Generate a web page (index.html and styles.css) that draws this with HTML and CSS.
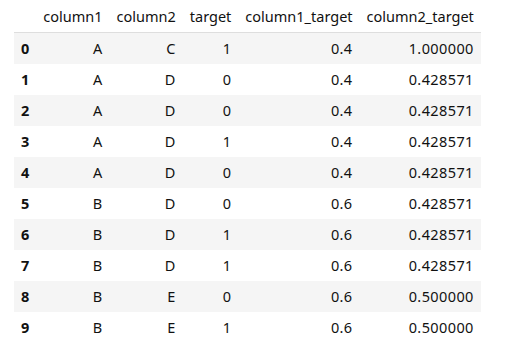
FILE: index.html
```html
<!DOCTYPE html>
<html>
<head>
<meta charset="utf-8">
<link rel="stylesheet" href="styles.css">
</head>
<body>
<div class="output">
<table class="dataframe">
<thead>
<tr><th class="blank"></th><th>column1</th><th>column2</th><th>target</th><th>column1_target</th><th>column2_target</th></tr>
</thead>
<tbody>
<tr><th>0</th><td>A</td><td>C</td><td>1</td><td>0.4</td><td>1.000000</td></tr>
<tr><th>1</th><td>A</td><td>D</td><td>0</td><td>0.4</td><td>0.428571</td></tr>
<tr><th>2</th><td>A</td><td>D</td><td>0</td><td>0.4</td><td>0.428571</td></tr>
<tr><th>3</th><td>A</td><td>D</td><td>1</td><td>0.4</td><td>0.428571</td></tr>
<tr><th>4</th><td>A</td><td>D</td><td>0</td><td>0.4</td><td>0.428571</td></tr>
<tr><th>5</th><td>B</td><td>D</td><td>0</td><td>0.6</td><td>0.428571</td></tr>
<tr><th>6</th><td>B</td><td>D</td><td>1</td><td>0.6</td><td>0.428571</td></tr>
<tr><th>7</th><td>B</td><td>D</td><td>1</td><td>0.6</td><td>0.428571</td></tr>
<tr><th>8</th><td>B</td><td>E</td><td>0</td><td>0.6</td><td>0.500000</td></tr>
<tr><th>9</th><td>B</td><td>E</td><td>1</td><td>0.6</td><td>0.500000</td></tr>
</tbody>
</table>
</div>
</body>
</html>
```
FILE: styles.css
```css
html, body {
  margin: 0;
  padding: 0;
  background: #ffffff;
}
.output {
  padding: 1px 0 0 14px;
}
.dataframe {
  border-collapse: collapse;
  border-spacing: 0;
  font-family: "Noto Sans", "Liberation Sans", sans-serif;
  font-size: 14.5px;
  color: #111;
}
.dataframe th,
.dataframe td {
  padding: 7px 7px;
  line-height: 17px;
  text-align: right;
  vertical-align: middle;
  white-space: nowrap;
}
.dataframe td {
  letter-spacing: 0.4px;
}
.dataframe thead th {
  font-weight: normal;
  border-bottom: 1px solid #dedede;
}
.dataframe tbody th {
  font-weight: bold;
  text-align: left;
}
.dataframe tbody tr:nth-child(odd) {
  background: #f5f5f5;
}
```
